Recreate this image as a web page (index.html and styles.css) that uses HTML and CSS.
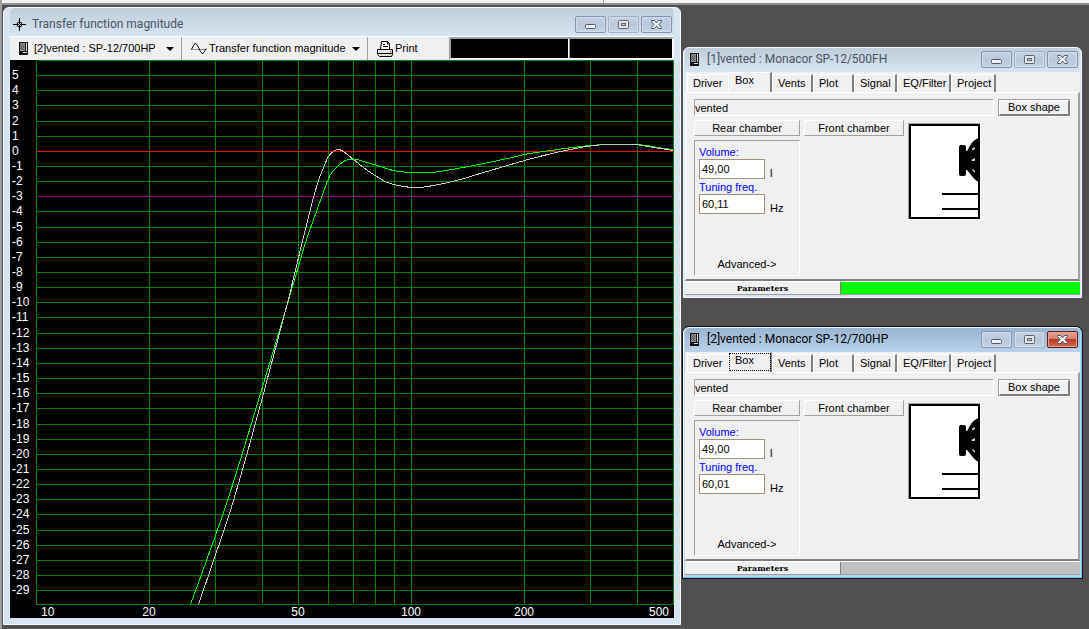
FILE: index.html
```
<!DOCTYPE html>
<html lang="en">
<head>
    <meta charset="UTF-8">
    <meta name="viewport" content="width=device-width, initial-scale=1.0">
    <title>Transfer function magnitude</title>
    <link rel="stylesheet" href="styles.css">
</head>
<body>
    <!-- shared icons -->
    <svg class="sprite" aria-hidden="true">
        <symbol id="i-min" viewBox="0 0 13 13">
            <rect x="1.5" y="6.5" width="10" height="4" rx="1" fill="#f4f4f4" stroke="#4f5668"/>
        </symbol>
        <symbol id="i-max" viewBox="0 0 13 13">
            <rect x="1.5" y="2.5" width="10" height="8" rx="1" fill="#e4e4e4" stroke="#5d6475"/>
            <rect x="4.5" y="5.5" width="4" height="2" fill="#b9c8da" stroke="#5d6475"/>
        </symbol>
        <symbol id="i-close" viewBox="0 0 13 13">
            <path d="M1.5 2.5h3l2 2.5 2-2.5h3v1l-2.500 3 2.500 3v1h-3l-2-2.500-2 2.500h-3v-1l2.500-3-2.500-3z" fill="#f4f4f4" stroke="#4f5668"/>
        </symbol>
        <symbol id="i-box" viewBox="0 0 9 13">
            <path d="M0 0h9v13H0z" fill="#111"/>
            <path d="M1 1h5v8H1z" fill="#8c8c8c"/>
            <path d="M1 2h1v1H1zM3 2h1v1H3zM2 3h1v1H2zM4 3h1v1H4zM1 4h1v1H1zM3 4h1v1H3zM2 5h1v1H2zM4 5h1v1H4zM1 6h1v1H1zM3 6h1v1H3zM2 7h1v1H2zM4 7h1v1H4z" fill="#555"/>
            <path d="M7 1h1v8H7zM4 10h4v1H4z" fill="#ddd"/>
        </symbol>
        <symbol id="i-down" viewBox="0 0 8 4">
            <path d="M0 0h8L4 4z"/>
        </symbol>
        <symbol id="i-speaker" viewBox="0 0 73 97">
            <path d="M0 0h72v1H1v95H0z" fill="#a0a0a0"/>
            <path d="M72 0h1v97H0v-1h72z" fill="#fff"/>
            <path d="M1 1h71v95H1z" fill="#000"/>
            <path d="M3 3h67v91H3z" fill="#fff"/>
            <path d="M51 24q0-2 2-2h3q2 0 2 2v4h1l4-7q3-4 7-6v44q-4-3-7-7l-4-5h-1v4q0 2-2 2h-3q-2 0-2-2z" fill="#000"/>
            <path d="M34 70h36v2H34zM34 85h36v2H34z" fill="#000"/>
            <path d="M64 26l2-2 1 1-1 2h-2zM63 37l4-2v3h-3zM64 47l1-1 2 2v2z" fill="#ccc"/>
        </symbol>
    </svg>

    <div class="app-strip"></div>

    <main class="desktop">
        <section class="window chart-window">
            <header class="titlebar">
                <svg class="cross-icon" viewBox="0 0 13 13" aria-hidden="true">
                    <path d="M6.5 0v13M0 6.5h13" stroke="#000"/>
                    <circle cx="6.5" cy="6.5" r="2.5" fill="none" stroke="#000"/>
                    <path d="M6 6h1v1H6z" fill="#fd6"/>
                </svg>
                <h1 class="title">Transfer function magnitude</h1>
                <div class="controls">
                    <button aria-label="Minimize"><svg><use href="#i-min"/></svg></button>
                    <button class="maximize" aria-label="Maximize"><svg><use href="#i-max"/></svg></button>
                    <button aria-label="Close"><svg><use href="#i-close"/></svg></button>
                </div>
            </header>
            <div class="toolbar">
                <div class="picker">
                    <svg class="box-icon" aria-hidden="true"><use href="#i-box"/></svg>
                    <select class="box-select" aria-label="Box">
                        <option>[2]vented : SP-12/700HP</option>
                        <option>[1]vented : SP-12/500FH</option>
                    </select>
                    <svg class="arrow" aria-hidden="true"><use href="#i-down"/></svg>
                </div>
                <div class="picker plot-picker">
                    <svg class="wave-icon" viewBox="0 0 16 12" aria-hidden="true">
                        <path d="M0 6.5h16" stroke="#999"/>
                        <path d="M.5 6.5l2-4 1.5-2h1l1.5 2 3 6 1.5 2h1l1.5-2 1.500-3" fill="none" stroke="#000"/>
                    </svg>
                    <select class="plot-select" aria-label="Plot">
                        <option>Transfer function magnitude</option>
                    </select>
                    <svg class="arrow" aria-hidden="true"><use href="#i-down"/></svg>
                </div>
                <button class="print">
                    <svg viewBox="0 0 16 16" aria-hidden="true">
                        <path d="M3.5 8.5l1-8h6l2 2v6" fill="#fff" stroke="#000"/>
                        <path d="M6 3.5h2M6 5.5h5M10.5 0v3h2" fill="none" stroke="#000"/>
                        <path d="M.5 8.5h15v5l-1 2h-12l-2-2z" fill="#ddd" stroke="#000"/>
                        <path d="M1 10h14" stroke="#fff" stroke-width="2" stroke-dasharray="1 1"/>
                        <path d="M1 12.5h14" stroke="#000"/>
                        <path d="M13 10h1v1h-1z" fill="#f00"/>
                    </svg>
                    Print
                </button>
                <div class="readout">
                    <output class="readout-x"></output>
                    <output class="readout-y"></output>
                </div>
            </div>
            <!-- origin of the drawing is the top left corner of the grid -->
            <svg class="chart" viewBox="-26 0 664 558" role="img" aria-label="Transfer function magnitude, dB over Hz">
                <g id="grid"></g>
                <g id="curves"></g>
                <g id="labels"></g>
            </svg>
        </section>

        <div class="boxes">
            <section class="window box-window">
                <header class="titlebar">
                    <svg class="box-icon" aria-hidden="true"><use href="#i-box"/></svg>
                    <h2 class="title">[1]vented : Monacor SP-12/500FH</h2>
                    <div class="controls">
                        <button aria-label="Minimize"><svg><use href="#i-min"/></svg></button>
                        <button class="maximize" aria-label="Maximize"><svg><use href="#i-max"/></svg></button>
                        <button aria-label="Close"><svg><use href="#i-close"/></svg></button>
                    </div>
                </header>
                <div class="client">
                    <div class="tabs" role="tablist">
                        <button role="tab">Driver</button>
                        <button role="tab" class="selected" aria-selected="true">Box</button>
                        <button role="tab">Vents</button>
                        <button role="tab">Plot</button>
                        <button role="tab">Signal</button>
                        <button role="tab">EQ/Filter</button>
                        <button role="tab">Project</button>
                    </div>
                    <div class="panel" role="tabpanel">
                        <div class="type-row">
                            <input class="type" type="text" value="vented" aria-label="Box type">
                            <div class="shape"><button>Box shape</button></div>
                        </div>
                        <div class="chambers">
                            <div class="chamber">
                                <button class="chamber-btn">Rear chamber</button>
                                <div class="fields">
                                    <label for="volume1">Volume:</label>
                                    <div class="field"><input id="volume1" type="text" value="49,00"><span>l</span></div>
                                    <label for="freq1">Tuning freq.</label>
                                    <div class="field"><input id="freq1" type="text" value="60,11"><span>Hz</span></div>
                                    <button class="advanced">Advanced-&gt;</button>
                                </div>
                            </div>
                            <div class="chamber front"><button class="chamber-btn">Front chamber</button></div>
                            <svg class="speaker" role="img" aria-label="Vented box"><use href="#i-speaker"/></svg>
                        </div>
                    </div>
                    <footer class="status">
                        <button class="parameters">Parameters</button>
                        <div class="color green"></div>
                    </footer>
                </div>
            </section>

            <section class="window box-window active">
                <header class="titlebar">
                    <svg class="box-icon" aria-hidden="true"><use href="#i-box"/></svg>
                    <h2 class="title">[2]vented : Monacor SP-12/700HP</h2>
                    <div class="controls">
                        <button aria-label="Minimize"><svg><use href="#i-min"/></svg></button>
                        <button class="maximize" aria-label="Maximize"><svg><use href="#i-max"/></svg></button>
                        <button class="close" aria-label="Close"><svg><use href="#i-close"/></svg></button>
                    </div>
                </header>
                <div class="client">
                    <div class="tabs" role="tablist">
                        <button role="tab">Driver</button>
                        <button role="tab" class="selected" aria-selected="true">Box</button>
                        <button role="tab">Vents</button>
                        <button role="tab">Plot</button>
                        <button role="tab">Signal</button>
                        <button role="tab">EQ/Filter</button>
                        <button role="tab">Project</button>
                    </div>
                    <div class="panel" role="tabpanel">
                        <div class="type-row">
                            <input class="type" type="text" value="vented" aria-label="Box type">
                            <div class="shape"><button>Box shape</button></div>
                        </div>
                        <div class="chambers">
                            <div class="chamber">
                                <button class="chamber-btn">Rear chamber</button>
                                <div class="fields">
                                    <label for="volume2">Volume:</label>
                                    <div class="field"><input id="volume2" type="text" value="49,00"><span>l</span></div>
                                    <label for="freq2">Tuning freq.</label>
                                    <div class="field"><input id="freq2" type="text" value="60,01"><span>Hz</span></div>
                                    <button class="advanced">Advanced-&gt;</button>
                                </div>
                            </div>
                            <div class="chamber front"><button class="chamber-btn">Front chamber</button></div>
                            <svg class="speaker" role="img" aria-label="Vented box"><use href="#i-speaker"/></svg>
                        </div>
                    </div>
                    <footer class="status">
                        <button class="parameters">Parameters</button>
                        <div class="color"></div>
                    </footer>
                </div>
            </section>
        </div>
    </main>

    <script src="chart.js"></script>
</body>
</html>
```
FILE: styles.css
```
* {
    box-sizing: border-box;
}

body {
    margin: 0;
    min-height: 100vh;
    display: flex;
    flex-direction: column;
    background: #505050;
    border-left: 2px solid #a0a0a0;
    color: #000;
    font: 11px/13px "Liberation Sans", Arial, sans-serif;
}

button,
input,
select {
    margin: 0;
    padding: 0;
    border: 0;
    border-radius: 0;
    background: none;
    color: inherit;
    font: inherit;
}

svg {
    display: block;
    flex: none;
}

.sprite {
    position: absolute;
    width: 0;
    height: 0;
}

.app-strip {
    height: 5px;
    background: linear-gradient(90deg, #f0f0f0 601px, #a0a0a0 601px, #a0a0a0 602px, #f4f4f4 602px);
    border-bottom: 2px solid #909090;
}

.desktop {
    flex: 1;
    display: grid;
    grid-template-columns: minmax(0, 1fr) 399px;
    gap: 2px;
    padding: 2px 7px 4px 1px;
}

/* windows */

.window {
    display: flex;
    flex-direction: column;
    border: 1px solid #f6f9fc;
    border-radius: 6px 6px 0 0;
    background: #d7e4f2;
}

.titlebar {
    display: flex;
    align-items: center;
    height: 28px;
    border-radius: 5px 5px 0 0;
    background: linear-gradient(#bfcddb, #d7e4f2);
}

.title {
    flex: 1;
    margin: 0;
    color: #4a535e;
    font: 12px/16px Roboto, "Open Sans", sans-serif;
    white-space: nowrap;
}

.controls {
    display: flex;
    gap: 2px;
}

.controls button {
    display: grid;
    place-items: center;
    width: 31px;
    height: 17px;
    border: 1px solid #8591ae;
    border-radius: 2px;
    background: linear-gradient(#c5d3e3, #b8c8db 50%, #c3d2e4);
    box-shadow: inset 0 0 0 1px #d2deeb;
}

.controls .maximize {
    border-color: #a2b0c3;
}

.controls svg {
    width: 13px;
    height: 13px;
}

.box-icon {
    width: 9px;
    height: 13px;
}

/* chart window */

.chart-window {
    padding: 0 6px 6px;
}

.chart-window .titlebar {
    padding: 4px 2px 0 3px;
}

.cross-icon {
    width: 13px;
    height: 13px;
    margin-right: 6px;
}

.toolbar {
    display: flex;
    height: 24px;
    border-top: 1px solid #fff;
    background: #f0f0f0;
}

.picker {
    display: flex;
    align-items: center;
    padding: 0 7px 0 9px;
    border-right: 1px solid #a0a0a0;
}

.picker select {
    appearance: none;
    height: 20px;
    margin-left: 6px;
}

.box-select {
    width: 132px;
}

.picker .plot-select {
    width: 143px;
    margin-left: 2px;
}

.wave-icon {
    width: 16px;
    height: 12px;
}

.arrow {
    width: 8px;
    height: 4px;
}

.print {
    display: flex;
    align-items: center;
    gap: 2px;
    padding-left: 9px;
}

.print svg {
    width: 16px;
    height: 16px;
}

.readout {
    display: flex;
    flex: 1;
    max-width: 225px;
    margin-left: auto;
    border: 2px solid #a0a0a0;
    border-right-color: #fff;
    border-bottom-color: #fff;
    background: #000;
}

.readout-x {
    flex: 118;
    border-right: 1px solid #fff;
}

.readout-y {
    flex: 102;
    border-left: 1px solid #a0a0a0;
}

.chart {
    flex: 1;
    width: 100%;
    min-height: 0;
    background: #000;
}

.chart line,
.curve {
    fill: none;
    stroke-width: 1px;
    shape-rendering: crispEdges;
}

.chart line {
    stroke: #008000;
}

.chart .zero {
    stroke: #ff0000;
}

.chart .cutoff {
    stroke: #800080;
}

.chart text {
    fill: #fff;
    font-size: 12px;
}

.curve-1 {
    stroke: #00ff00;
}

.curve-2 {
    stroke: #c8c8c8;
}

/* box windows */

.boxes {
    display: flex;
    flex-direction: column;
    gap: 29px;
    padding-top: 40px;
}

.box-window {
    padding: 0 1px 2px;
}

.box-window .titlebar {
    height: 24px;
    padding: 0 2px 2px 5px;
}

.box-window .title {
    margin-left: 8px;
}

.active {
    border-color: #e8f7ff #5cc8e8 #5cc8e8 #fff;
    background: #b9d1ea;
    box-shadow: 0 0 0 1px #101418;
}

.active .titlebar {
    background: linear-gradient(#99b4d1, #b9d1ea);
}

.active .title {
    color: #000;
}

.controls .close {
    border-color: #5e1d18;
    background: linear-gradient(#e3a396, #d3806f 48%, #bb3a22 50%, #cf6a52);
    box-shadow: inset 0 0 0 1px #e2a598;
}

.client {
    background: #f0f0f0;
}

.tabs {
    display: flex;
    align-items: flex-end;
    height: 20px;
    padding-left: 2px;
}

.tabs button {
    height: 18px;
    width: 41px;
    padding-left: 5px;
    border-left: 1px solid #fff;
    border-top: 1px solid #fff;
    border-right: 2px solid #808080;
    text-align: left;
    white-space: nowrap;
}

.tabs button:first-child {
    border-right: 0;
}

.tabs .selected {
    width: 44px;
    height: 20px;
    padding: 0 0 4px 6px;
}

.tabs button:nth-child(5) {
    width: 43px;
}

.tabs button:nth-child(6) {
    width: 54px;
}

.tabs button:nth-child(7) {
    width: 45px;
}

.active .tabs .selected {
    outline: 1px dotted #000;
    outline-offset: -2px;
}

.panel {
    height: 189px;
    padding: 6px 7px 0 8px;
    border: 1px solid #fff;
    border-right: 2px solid #a0a0a0;
    border-bottom: 2px solid #808080;
}

.type-row {
    display: flex;
    gap: 4px;
}

.type {
    flex: 1;
    min-width: 0;
    height: 17px;
    border: 1px solid #a0a0a0;
    border-right-color: #fff;
    border-bottom-color: #fff;
}

.shape {
    width: 73px;
    height: 18px;
    border: 1px solid #a0a0a0;
    border-right-color: #fff;
    border-bottom-color: #fff;
}

.shape button {
    width: 100%;
    height: 16px;
    border: 1px solid #fff;
    border-right: 2px solid #808080;
    border-bottom: 2px solid #808080;
}

.chambers {
    display: flex;
    gap: 4px;
    padding-top: 3px;
}

.chamber {
    width: 106px;
}

.front {
    width: 100px;
}

.chamber-btn {
    width: 100%;
    height: 16px;
    border: 1px solid #fff;
    border-right-color: #a0a0a0;
    border-bottom-color: #a0a0a0;
}

.fields {
    display: flex;
    flex-direction: column;
    height: 136px;
    margin-top: 4px;
    padding: 4px;
    border: 1px solid #a0a0a0;
    border-right-color: #fff;
    border-bottom-color: #fff;
}

.fields label {
    height: 14px;
    line-height: 14px;
    color: #0000ff;
}

.field {
    display: flex;
    gap: 5px;
    height: 21px;
}

.field input {
    width: 66px;
    height: 20px;
    padding-left: 2px;
    border: 1px solid #a09080;
    background: #fff;
}

.field span {
    padding-top: 8px;
    line-height: 12px;
}

.advanced {
    margin-top: auto;
}

.speaker {
    width: 73px;
    height: 97px;
    margin-top: 3px;
}

.status {
    display: flex;
    height: 14px;
    border-top: 1px solid #fff;
    border-bottom: 1px solid #a0a0a0;
}

.parameters {
    width: 156px;
    border-right: 1px solid #808080;
    font: bold 8px/10px "DejaVu Serif", serif;
}

.color {
    flex: 1;
    background: #c0c0c0;
}

.green {
    background: #00ff00;
}
```
FILE: chart.js
```
const NS = 'http://www.w3.org/2000/svg';
const WIDTH = 637;
const HEIGHT = 544;

const grid = document.getElementById('grid');
const curves = document.getElementById('curves');
const labels = document.getElementById('labels');

const box1 = [
    [154, 544], [170, 500], [187, 452], [204, 399], [227, 323], [249, 250], [262, 206],
    [269, 182], [281, 148], [292, 118], [297, 110], [302, 105], [307, 101], [312, 99],
    [320, 99], [327, 101], [341, 105], [357, 110], [374, 112], [391, 112], [404, 111],
    [437, 105], [471, 98], [488, 94], [507, 91], [521, 89], [537, 87], [554, 85],
    [571, 84], [597, 84], [611, 85], [621, 87], [637, 89]
];

const box2 = [
    [162, 544], [177, 500], [193, 453], [210, 395], [227, 333], [249, 250], [256, 222],
    [262, 197], [272, 157], [277, 137], [282, 120], [287, 107], [292, 96], [297, 91],
    [302, 89], [307, 91], [312, 95], [317, 99], [327, 107], [337, 114], [351, 122],
    [367, 126], [381, 127], [397, 125], [424, 119], [437, 115], [471, 105], [488, 100],
    [507, 95], [524, 91], [544, 87], [557, 85], [571, 84], [597, 84], [611, 86], [637, 90]
];

function xPos(freq) {
    return Math.round(WIDTH * Math.log(freq / 10) / Math.log(50));
}

function yPos(db) {
    return Math.round(90.8 - 15.15 * db);
}

function addLine(x1, y1, x2, y2, className) {
    const line = document.createElementNS(NS, 'line');
    line.setAttribute('x1', x1 + 0.5);
    line.setAttribute('y1', y1 + 0.5);
    line.setAttribute('x2', x2 + 0.5);
    line.setAttribute('y2', y2 + 0.5);
    if (className) line.setAttribute('class', className);
    grid.appendChild(line);
}

function addText(x, y, text, anchor) {
    const el = document.createElementNS(NS, 'text');
    el.setAttribute('x', x);
    el.setAttribute('y', y);
    el.setAttribute('text-anchor', anchor);
    el.textContent = text;
    labels.appendChild(el);
}

// smooth line through all points
function addCurve(points, className) {
    let d = `M${points[0]}`;
    for (let i = 0; i < points.length - 1; i++) {
        const p0 = points[i - 1] || points[i];
        const p1 = points[i];
        const p2 = points[i + 1];
        const p3 = points[i + 2] || p2;
        d += `C${p1[0] + (p2[0] - p0[0]) / 6},${p1[1] + (p2[1] - p0[1]) / 6}`;
        d += ` ${p2[0] - (p3[0] - p1[0]) / 6},${p2[1] - (p3[1] - p1[1]) / 6} ${p2}`;
    }
    const path = document.createElementNS(NS, 'path');
    path.setAttribute('d', d);
    path.setAttribute('transform', 'translate(0.5 0.5)');
    path.setAttribute('class', `curve ${className}`);
    curves.appendChild(path);
}

for (const freq of [10, 20, 30, 40, 50, 60, 70, 80, 90, 100, 200, 300, 400, 500]) {
    addLine(xPos(freq), 0, xPos(freq), HEIGHT);
}

addLine(0, 0, WIDTH, 0);
addLine(0, HEIGHT, WIDTH, HEIGHT);

for (let db = 5; db >= -29; db--) {
    const className = db === 0 ? 'zero' : db === -3 ? 'cutoff' : '';
    addLine(0, yPos(db), WIDTH, yPos(db), className);
    addText(-24, yPos(db) + 4, db, 'start');
}

addText(5, 556, 10, 'start');
addText(633, 556, 500, 'end');
for (const freq of [20, 50, 100, 200]) {
    addText(xPos(freq), 556, freq, 'middle');
}

addCurve(box1, 'curve-1');
addCurve(box2, 'curve-2');
```
